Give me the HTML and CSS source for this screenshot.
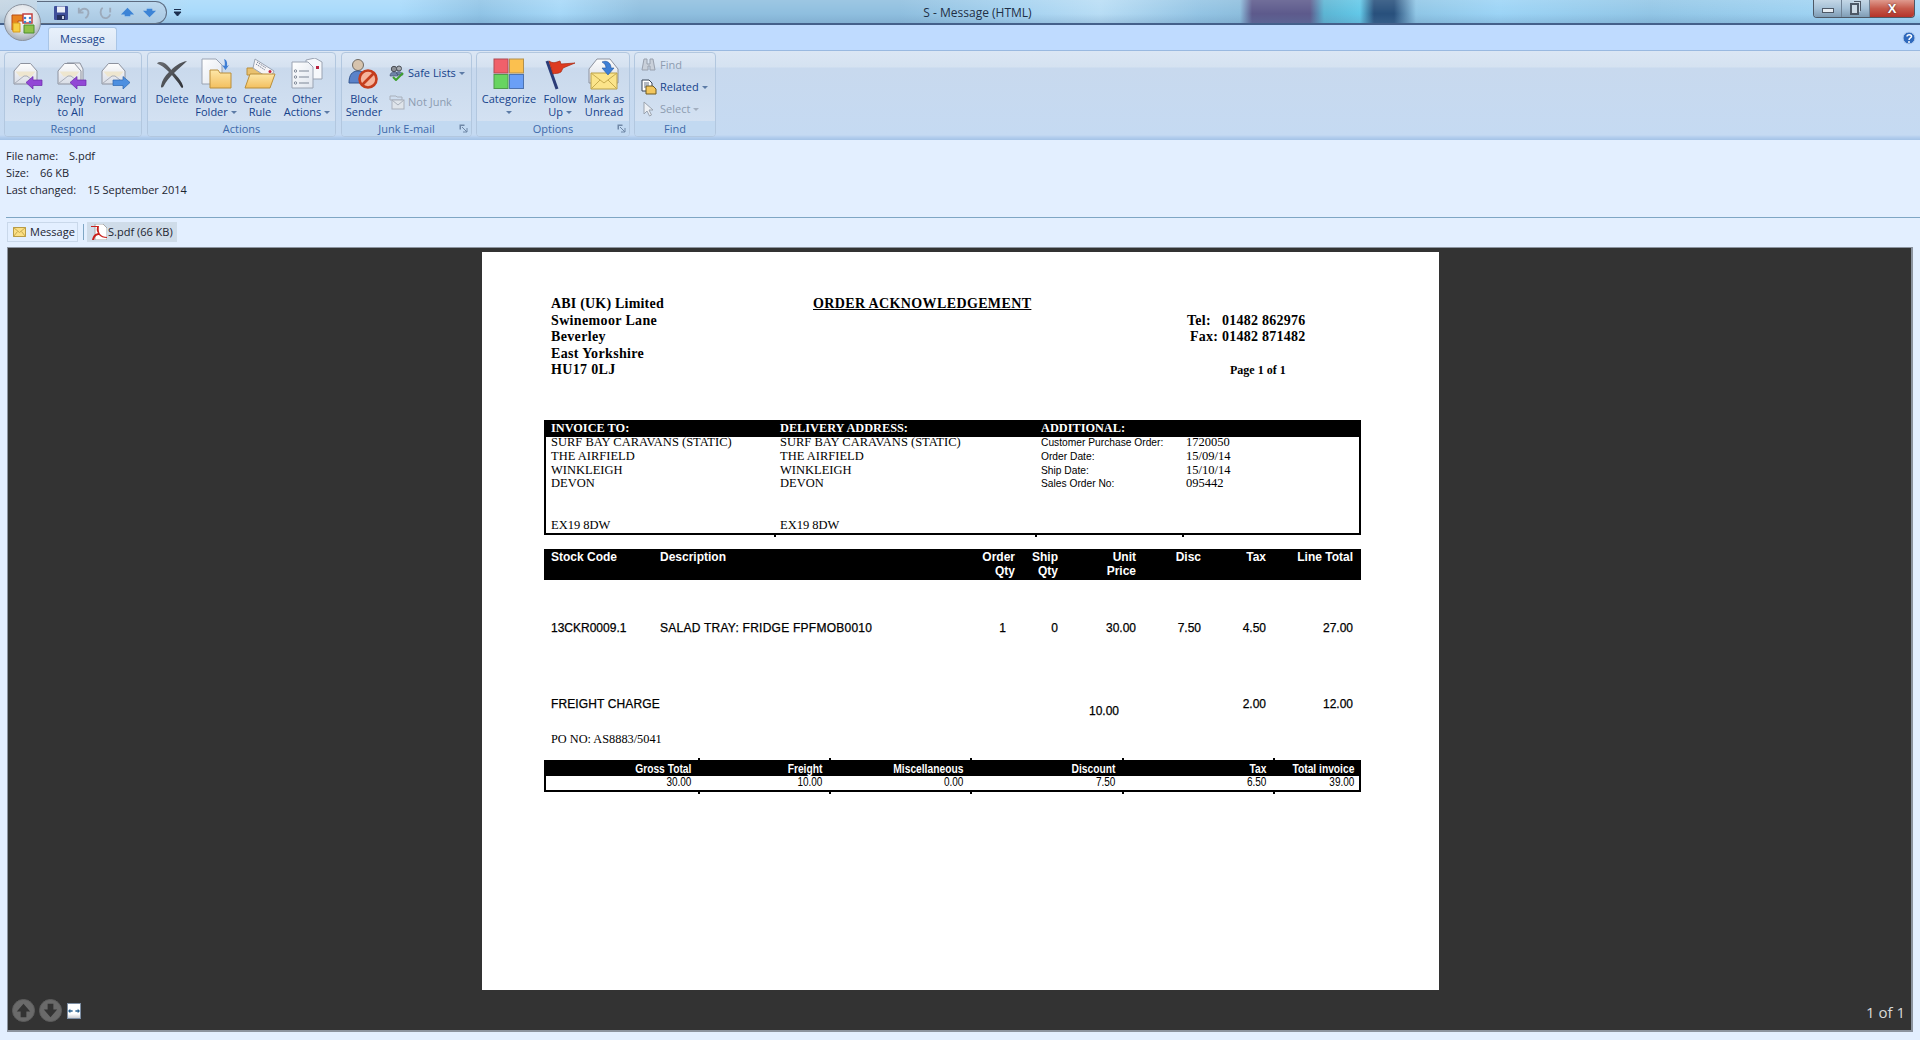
FILE: index.html
```html
<!DOCTYPE html>
<html lang="en">
<head>
<meta charset="utf-8">
<title>S - Message (HTML)</title>
<link rel="stylesheet" href="styles.css">
</head>
<body>
<svg class="defs" width="0" height="0" aria-hidden="true">
  <defs>
    <linearGradient id="gEnv" x1="0" y1="0" x2="0" y2="1"><stop offset="0" stop-color="#fdfdfd"/><stop offset="1" stop-color="#d9dde6"/></linearGradient>
    <linearGradient id="gFold" x1="0" y1="0" x2="0" y2="1"><stop offset="0" stop-color="#fde7a8"/><stop offset="1" stop-color="#f3bf5e"/></linearGradient>
    <linearGradient id="gDoc" x1="0" y1="0" x2="1" y2="1"><stop offset="0" stop-color="#ffffff"/><stop offset="1" stop-color="#dfe5ee"/></linearGradient>
    <linearGradient id="gX" x1="0" y1="0" x2="1" y2="1"><stop offset="0" stop-color="#6c6f74"/><stop offset="1" stop-color="#2f3136"/></linearGradient>
    <radialGradient id="gOrb" cx=".5" cy=".35" r=".7"><stop offset="0" stop-color="#fbfbfb"/><stop offset=".55" stop-color="#dfe3e8"/><stop offset="1" stop-color="#9aa2ad"/></radialGradient>
    <symbol id="env" viewBox="0 0 32 32">
      <path d="M3 13 9.500 5.500h10L26 13v13H3z" fill="url(#gEnv)" stroke="#8d929e"/>
      <path d="M4.500 13.500h20l-4 5h-12z" fill="#eee6cf"/>
      <path d="M3.500 25.500 13 18h3l9.500 7.500" fill="none" stroke="#a9aeb9"/>
    </symbol>
    <symbol id="i-reply" viewBox="0 0 32 32">
      <use href="#env"/>
      <path d="M15 24.500 22 18.500v3.500h9v5.500h-9V31z" fill="#9247d6" stroke="#6a2aa8" stroke-width=".7"/>
    </symbol>
    <symbol id="i-replyall" viewBox="0 0 32 32">
      <path d="M12 5h13l3 6v12H14z" fill="#eef0f4" stroke="#8d929e"/>
      <use href="#env"/>
      <path d="M15 24.500 22 18.500v3.500h9v5.500h-9V31z" fill="#9247d6" stroke="#6a2aa8" stroke-width=".7"/>
    </symbol>
    <symbol id="i-forward" viewBox="0 0 32 32">
      <use href="#env"/>
      <path d="M31 24.500 24 18.500v3.500h-10v5.500h10V31z" fill="#4d8fe0" stroke="#2b65b0" stroke-width=".7"/>
    </symbol>
    <symbol id="i-delete" viewBox="0 0 32 32">
      <path d="M1 5.500C3 3 8 4 11 7c3 3 5 6 7 8 4 4 8 9 9 13 .5 2-1 2.500-2 1C22 24 17 18 13 14 9 10 5 7 1 5.500z" fill="url(#gX)"/>
      <path d="M31 3C24 4 18 9 13 14 9 18 6 22 5 28c-.3 2 1.500 2 2.500.5C10 23 14 19 18 15c4-4 9-8 13-12z" fill="url(#gX)"/>
    </symbol>
    <symbol id="i-move" viewBox="0 0 32 32">
      <path d="M2 1h14l6 6v19H2z" fill="url(#gDoc)" stroke="#9aa3b2"/>
      <path d="M10 12h8l2 3h11v15H10z" fill="url(#gFold)" stroke="#b98e3c"/>
      <path d="M24 1c3 1 3.500 4 3 7l2-1-3.500 5L22 7l2.500 1c.5-2 .5-4-.5-7z" fill="#3f7fd4"/>
    </symbol>
    <symbol id="i-rule" viewBox="0 0 32 32">
      <path d="M3 10h9l2 3h12v4H3z" fill="#e9c16f" stroke="#b98e3c"/>
      <path d="M11 1 30 13l-4 8-17-11z" fill="#f6f4f6" stroke="#9aa3b2"/>
      <path d="M13 4l9 6M12 6l9 6" stroke="#6e7c93" stroke-dasharray="1.500 1"/>
      <circle cx="26" cy="13.500" r="1.500" fill="#c4213d"/>
      <path d="M6 16h25l-5 14H1z" fill="url(#gFold)" stroke="#b98e3c"/>
    </symbol>
    <symbol id="i-other" viewBox="0 0 32 32">
      <path d="M15 2 24 0l7 4v17H15z" fill="#f6f8fb" stroke="#9aa3b2"/>
      <rect x="25" y="8" width="3" height="3" fill="#b8223f"/>
      <path d="M1 4h16l5 5v21H1z" fill="url(#gDoc)" stroke="#9aa3b2"/>
      <g stroke="#7c8696"><path d="M8 13h10M8 19h10M8 25h10" fill="none"/><circle cx="4.500" cy="13" r="1.200" fill="#fff"/><circle cx="4.500" cy="19" r="1.200" fill="#fff"/><circle cx="4.500" cy="25" r="1.200" fill="#fff"/></g>
    </symbol>
    <symbol id="i-block" viewBox="0 0 32 32">
      <circle cx="10" cy="7" r="5.500" fill="#d6c3ad" stroke="#6f6a63"/>
      <path d="M1 25c0-8 3-12 9-12s9 4 9 12z" fill="#5a82c9" stroke="#32558f"/>
      <circle cx="20" cy="21" r="8.500" fill="#f5b49c" stroke="#c43d1d" stroke-width="2.600"/>
      <path d="M14 27 26 15" stroke="#c43d1d" stroke-width="2.600"/>
    </symbol>
    <symbol id="i-cat" viewBox="0 0 32 32">
      <rect x="1" y="1" width="14" height="14" fill="#f0606a" stroke="#b04a52"/>
      <rect x="16.500" y="1" width="14" height="14" fill="#fbc04f" stroke="#b3904c"/>
      <rect x="1" y="16.500" width="14" height="14" fill="#67d460" stroke="#4f9a4a"/>
      <rect x="16.500" y="16.500" width="14" height="14" fill="#6a9ff6" stroke="#4d73b0"/>
    </symbol>
    <symbol id="i-flag" viewBox="0 0 32 32">
      <path d="M3 3 13 31" stroke="#2b3c78" stroke-width="3"/>
      <path d="M5 3c3 2 5 2 8 1l3-1 1 3 14-1-12 5-2 4c-3 2-6 1-8 2z" fill="#de3b20" stroke="#a8260f" stroke-width=".7"/>
    </symbol>
    <symbol id="i-unread" viewBox="0 0 32 32">
      <path d="M1 11 9 1h13l8 10v14H1z" fill="url(#gEnv)" stroke="#8d929e"/>
      <path d="M3 15h26v16H3z" fill="#fbe48a" stroke="#b9a04a"/>
      <path d="M3 15l13 10 13-10M3 31l9-9M29 31l-9-9" fill="none" stroke="#c7ab4e"/>
      <path d="M14 4c4-2 9 0 9 6h3l-6 7-6-7h4c0-3-2-5-4-6z" fill="#3d7fd6" stroke="#27589e" stroke-width=".6"/>
    </symbol>
    <symbol id="i-safe" viewBox="0 0 16 16">
      <circle cx="5" cy="4" r="2.700" fill="#8b8f95" stroke="#4b4f56"/>
      <circle cx="10" cy="3.500" r="2.500" fill="#a7abb0" stroke="#4b4f56"/>
      <path d="M1 11c0-3 2-4 4-4s4 1 4 4zM7 8c1-2 6-2 7 2H9z" fill="#6f84a8" stroke="#3f4f6d" stroke-width=".6"/>
      <path d="M4 12l3 3 7-7" fill="none" stroke="#3ea02f" stroke-width="2"/>
    </symbol>
    <symbol id="i-notjunk" viewBox="0 0 16 16">
      <path d="M1 2h6l1 1h5v3H1z" fill="none" stroke="#a9b0bb"/>
      <rect x="3" y="6" width="12" height="9" fill="#dfe4ea" stroke="#a9b0bb"/>
      <path d="M3 6l6 5 6-5" fill="none" stroke="#a9b0bb"/>
    </symbol>
    <symbol id="i-find" viewBox="0 0 16 16">
      <path d="M3 2h3v5h3V2h3l2 11H9V9H7v4H1z" fill="#c9d0da" stroke="#98a0ad"/>
    </symbol>
    <symbol id="i-related" viewBox="0 0 16 16">
      <path d="M1 1h7l3 3v8H1z" fill="#fff" stroke="#394556"/>
      <path d="M5 7h7l3 3v5H5z" fill="#f3c75e" stroke="#6e5a22"/>
      <path d="M3 4h5M3 6h5M3 8h2" stroke="#687587"/>
    </symbol>
    <symbol id="i-select" viewBox="0 0 16 16">
      <path d="M3 1v12l3-3 2.500 5 2-1-2.500-5h4z" fill="#eef1f5" stroke="#9aa3af"/>
    </symbol>
    <symbol id="i-launch" viewBox="0 0 9 9">
      <path d="M.5.500h5v1.500h-3.500v3.500H.5z" fill="#6f87a6"/>
      <path d="M3 3l5 5M8 4v4H4" fill="none" stroke="#6f87a6"/>
    </symbol>
  </defs>
</svg>

<header class="titlebar">
  <div class="qat">
    <svg class="qi" viewBox="0 0 16 16"><rect x="1" y="1" width="14" height="14" rx="1" fill="#3f4f9a"/><rect x="4" y="1.500" width="8" height="6" fill="#e9edf6"/><rect x="4" y="10" width="8" height="5" fill="#26315f"/><rect x="9" y="11" width="2" height="3" fill="#c8d0e4"/></svg>
    <svg class="qi" viewBox="0 0 16 16"><path d="M3 3v5h5M3.500 8C5 4 9 3 12 5c2 2 2 6-2 9" fill="none" stroke="#9caabb" stroke-width="2"/></svg>
    <svg class="qi" viewBox="0 0 16 16"><path d="M13 3v5M5 3C2 5 2 10 5 13c3 2 7 1 8-3" fill="none" stroke="#9caabb" stroke-width="2"/></svg>
    <svg class="qi" viewBox="0 0 16 16"><path d="M8 3l7 7h-4v2H5v-2H1z" fill="#3d84d6"/><path d="M6 12h4v1H6z" fill="#8ec0f0"/></svg>
    <svg class="qi" viewBox="0 0 16 16"><path d="M8 13l7-7h-4V4H5v2H1z" fill="#3d84d6"/><path d="M6 3h4v1H6z" fill="#8ec0f0"/></svg>
  </div>
  <svg class="qatmore" viewBox="0 0 9 9"><path d="M1 1.500h7M1 4h7L4.500 8z" fill="#1c2f4f" stroke="#1c2f4f"/></svg>
  <div class="wintitle">S - Message (HTML)</div>
  <div class="winbtns">
    <span class="wb wb-min"><i></i></span>
    <span class="wb wb-max"><i></i></span>
    <span class="wb wb-close">X</span>
  </div>
</header>

<button class="orb" type="button" aria-label="Office button">
  <svg viewBox="0 0 37 37" width="37" height="37">
    <circle cx="18.500" cy="18.500" r="18" fill="url(#gOrb)" stroke="#8a929e"/>
    <path d="M8 11h11v6h-5v9H8z" fill="#e88420" stroke="#b84c14"/>
    <path d="M19 10h9v9h-9z" fill="#fff" stroke="#c2403f" stroke-width="1.500"/>
    <path d="M9 19h7v9H9z" fill="#f7cf45" stroke="#d89b1c"/>
    <path d="M20 21h10v8H20z" fill="#8fc24a" stroke="#4b8e2e"/>
    <circle cx="21" cy="14" r="1.300" fill="#3f82d0"/><circle cx="26" cy="14" r="1.300" fill="#3f82d0"/><circle cx="21" cy="18" r="1.300" fill="#3f82d0"/><circle cx="26" cy="18" r="1.300" fill="#3f82d0"/>
  </svg>
</button>

<nav class="tabstrip">
  <div class="tab">Message</div>
  <svg class="help" viewBox="0 0 14 14"><circle cx="7" cy="7" r="6" fill="#2f69bd" stroke="#b5cdee"/><path d="M5 5.500C5 3 9.500 3 9.500 5.500 9.500 7 7 7 7 9" fill="none" stroke="#fff" stroke-width="1.500"/><circle cx="7" cy="11" r="1" fill="#fff"/></svg>
</nav>

<section class="ribbon">
  <div class="group g-respond">
    <div class="gbody">
      <div class="rb w44"><svg class="lg"><use href="#i-reply"/></svg><span>Reply</span></div>
      <div class="rb w43"><svg class="lg"><use href="#i-replyall"/></svg><span>Reply<br>to All</span></div>
      <div class="rb w46"><svg class="lg"><use href="#i-forward"/></svg><span>Forward</span></div>
    </div>
    <div class="glabel">Respond</div>
  </div>
  <div class="group g-actions">
    <div class="gbody">
      <div class="rb w44"><svg class="lg"><use href="#i-delete"/></svg><span>Delete</span></div>
      <div class="rb w44"><svg class="lg"><use href="#i-move"/></svg><span>Move to<br>Folder <b class="dd"></b></span></div>
      <div class="rb w44"><svg class="lg"><use href="#i-rule"/></svg><span>Create<br>Rule</span></div>
      <div class="rb w50"><svg class="lg"><use href="#i-other"/></svg><span>Other<br>Actions <b class="dd"></b></span></div>
    </div>
    <div class="glabel">Actions</div>
  </div>
  <div class="group g-junk">
    <div class="gbody">
      <div class="rb w42"><svg class="lg"><use href="#i-block"/></svg><span>Block<br>Sender</span></div>
      <div class="smcol junkcol">
        <div class="sm"><svg class="smi"><use href="#i-safe"/></svg><span>Safe Lists <b class="dd"></b></span></div>
        <div class="sm off"><svg class="smi"><use href="#i-notjunk"/></svg><span>Not Junk</span></div>
      </div>
    </div>
    <div class="glabel">Junk E-mail<svg class="launch"><use href="#i-launch"/></svg></div>
  </div>
  <div class="group g-options">
    <div class="gbody">
      <div class="rb w60"><svg class="lg"><use href="#i-cat"/></svg><span>Categorize<br><b class="dd"></b></span></div>
      <div class="rb w42"><svg class="lg"><use href="#i-flag"/></svg><span>Follow<br>Up <b class="dd"></b></span></div>
      <div class="rb w46"><svg class="lg"><use href="#i-unread"/></svg><span>Mark as<br>Unread</span></div>
    </div>
    <div class="glabel">Options<svg class="launch"><use href="#i-launch"/></svg></div>
  </div>
  <div class="group g-find">
    <div class="gbody">
      <div class="smcol findcol">
        <div class="sm off"><svg class="smi"><use href="#i-find"/></svg><span>Find</span></div>
        <div class="sm"><svg class="smi"><use href="#i-related"/></svg><span>Related <b class="dd"></b></span></div>
        <div class="sm off"><svg class="smi"><use href="#i-select"/></svg><span>Select <b class="dd"></b></span></div>
      </div>
    </div>
    <div class="glabel">Find</div>
  </div>
</section>

<section class="info">
  <p><span class="k">File name:</span>S.pdf</p>
  <p><span class="k">Size:</span>66 KB</p>
  <p><span class="k">Last changed:</span>15 September 2014</p>
</section>

<section class="attach">
  <div class="at at-msg">
    <svg class="ati" viewBox="0 0 13 10"><rect x=".5" y=".5" width="12" height="9" fill="#fbdf84" stroke="#b89b45"/><path d="M.5.500l6 5 6-5M.5 9.500l4-5M12.500 9.500l-4-5" fill="none" stroke="#c8ab50"/></svg>
    Message
  </div>
  <div class="atsep"></div>
  <div class="at at-pdf">
    <svg class="pdfi" viewBox="0 0 16 16"><path d="M4 0h8l4 4v12H4z" fill="#fff" stroke="#a9a9a9"/><path d="M0 2h8c0 0-1 5 1 8 1.500 2 4 3 7 3v1c-4 0-6-1-8-3-2 0-4 1-5 5H1c1-5 3-6 6-7C5 6 6 5 6 3H0z" fill="#c9201c"/></svg>
    S.pdf (66 KB)
  </div>
</section>

<main class="frame">
  <article class="page">
    <div class="dochead">
      <div class="co">
        <div class="co1">ABI (UK) Limited</div>
        <div>Swinemoor Lane</div>
        <div>Beverley</div>
        <div>East Yorkshire</div>
        <div>HU17 0LJ</div>
      </div>
      <h1 class="doctitle">ORDER ACKNOWLEDGEMENT</h1>
      <div class="contact">
        <div class="tel">Tel:&nbsp;&nbsp; 01482 862976</div>
        <div class="fax">Fax: 01482 871482</div>
        <div class="pg">Page 1 of 1</div>
      </div>
    </div>

    <div class="addr">
      <div class="addr-h">
        <span>INVOICE TO:</span><span>DELIVERY ADDRESS:</span><span>ADDITIONAL:</span>
      </div>
      <div class="addr-b">
        <div>SURF BAY CARAVANS (STATIC)<br>THE AIRFIELD<br>WINKLEIGH<br>DEVON<div class="pc">EX19 8DW</div></div>
        <div>SURF BAY CARAVANS (STATIC)<br>THE AIRFIELD<br>WINKLEIGH<br>DEVON<div class="pc">EX19 8DW</div></div>
        <dl class="addl">
          <dt>Customer Purchase Order:</dt><dd>1720050</dd>
          <dt>Order Date:</dt><dd>15/09/14</dd>
          <dt>Ship Date:</dt><dd>15/10/14</dd>
          <dt>Sales Order No:</dt><dd>095442</dd>
        </dl>
      </div>
    </div>
    <div class="ticks ticks-a"><i></i><i></i><i></i><i></i></div>

    <div class="lines lines-h">
      <span class="c-code">Stock Code</span><span class="c-desc">Description</span>
      <span class="r">Order<br>Qty</span><span class="r">Ship<br>Qty</span><span class="r">Unit<br>Price</span><span class="r">Disc</span><span class="r">Tax</span><span class="r">Line Total</span>
    </div>
    <div class="lines row1">
      <span class="c-code">13CKR0009.1</span><span class="c-desc salad">SALAD TRAY: FRIDGE FPFMOB0010</span>
      <span class="r one">1</span><span class="r">0</span><span class="r">30.00</span><span class="r">7.50</span><span class="r">4.50</span><span class="r">27.00</span>
    </div>
    <div class="lines row2">
      <span class="c-wide">FREIGHT CHARGE</span>
      <span class="r drop">10.00</span><span class="r"></span><span class="r">2.00</span><span class="r">12.00</span>
    </div>
    <div class="pono">PO NO: AS8883/5041</div>

    <div class="ticks ticks-t"><i></i><i></i><i></i><i></i><i></i><i></i></div>
    <div class="totals">
      <div class="tot-h"><span>Gross Total</span><span>Freight</span><span>Miscellaneous</span><span>Discount</span><span>Tax</span><span>Total invoice</span></div>
      <div class="tot-b"><span>30.00</span><span>10.00</span><span>0.00</span><span>7.50</span><span>6.50</span><span>39.00</span></div>
    </div>
    <div class="ticks ticks-t"><i></i><i></i><i></i><i></i><i></i><i></i></div>
  </article>

  <div class="pager">
    <span class="circ"><svg viewBox="0 0 22 22"><path d="M11 4l7 8h-4v6H8v-6H4z" fill="#333"/></svg></span>
    <span class="circ"><svg viewBox="0 0 22 22"><path d="M11 18l7-8h-4V4H8v6H4z" fill="#333"/></svg></span>
    <span class="fit"><svg viewBox="0 0 13 8"><path d="M0 4l2.500-2.500v1.700H5v1.600H2.500v1.700zM13 4l-2.500-2.500v1.700H8v1.600h2.500v1.700z" fill="#27608f"/></svg></span>
  </div>
  <div class="count">1 of 1</div>
</main>
</body>
</html>
```

FILE: styles.css
```css
* { box-sizing: border-box; }
html, body { margin: 0; height: 100%; }
body {
  width: 1920px; height: 1040px; overflow: hidden; position: relative;
  background: #e3efff;
  font-family: "Open Sans", "Noto Sans", "Liberation Sans", sans-serif;
  font-size: 11px; color: #15428b;
}
.defs { position: absolute; }

/* title bar */
.titlebar {
  height: 25px; display: flex; align-items: flex-start;
  border-bottom: 2px solid #44608a;
  background:
    linear-gradient(180deg, rgba(255,255,255,.12) 0, rgba(255,255,255,0) 60%, rgba(90,130,170,.25) 100%),
    linear-gradient(90deg, #c3d4e2 0, #b5d3ea 110px, #a8dafb 190px, #a8dafb 400px, #90c4e6 480px, #a6d8f8 560px, #8fbfdf 640px, #8fbfdf 900px, #a5d2f0 1020px, #b8ddf5 1100px, #93c4e4 1200px, #8dbedd 1240px, #5d5a8c 1252px, #5d5a8c 1310px, #5cb5d3 1324px, #62c8e8 1360px, #28507c 1374px, #28507c 1394px, #8fc6e6 1416px, #9cd4f6 1500px, #92c6e6 1650px, #a6dafa 1920px);
}
.qat {
  margin-left: 37px; width: 130px; height: 23px; margin-top: 1px;
  display: flex; align-items: center; gap: 7px; padding-left: 16px;
  border: 1px solid #5c6b80; border-left: 0; border-radius: 0 12px 12px 0;
  background: linear-gradient(180deg, #bcd8ee, #a9c8e2);
}
.qi { width: 15px; height: 15px; }
.qat .qi:first-child { width: 16px; height: 16px; }
.qatmore { width: 9px; height: 9px; margin: 8px 0 0 6px; }
.wintitle {
  flex: 1; text-align: center; padding-right: 40px; padding-top: 4px;
  font-size: 12px; line-height: 17px; color: #1f2f45;
}
.winbtns {
  display: flex; height: 18px; margin-right: 5px; width: 102px;
  border: 1px solid #4d5866; border-top: 0; border-radius: 0 0 4px 4px; overflow: hidden;
}
.wb { display: flex; align-items: center; justify-content: center; }
.wb-min, .wb-max { width: 28px; background: linear-gradient(180deg, #c4d7e6, #a5c0d6 50%, #7f9cb4); border-right: 1px solid #6f8295; }
.wb-min i { width: 12px; height: 5px; margin-top: 4px; background: #e6edf3; border: 1px solid #4d5866; }
.wb-max i { width: 9px; height: 12px; margin-left: -2px; background: #cddbe7; border: 2px solid #4d5866; box-shadow: 2px -2px 0 -1px #cddbe7, 3px -3px 0 -1px #4d5866; }
.wb-close {
  flex: 1; background: linear-gradient(180deg, #df9a8e, #c65a4b 50%, #b4332a);
  color: #fff; font-weight: 700; font-size: 13px; line-height: 1; font-family: "Liberation Sans", sans-serif;
  text-shadow: 0 0 2px #45261f;
}

/* office orb */
.orb {
  position: absolute; left: 4px; top: 4px; width: 37px; height: 37px;
  padding: 0; border: 0; background: none;
}

/* tabs */
.tabstrip {
  height: 25px; display: flex; align-items: flex-end; justify-content: space-between;
  padding: 0 4px 0 48px; background: #bfdbff;
}
.tab {
  width: 69px; height: 23px; text-align: center; line-height: 21px;
  font-size: 11px; color: #15428b;
  background: linear-gradient(180deg, #e8f1fb, #dbe6f4);
  border: 1px solid #a9c5e6; border-bottom: 0; border-radius: 3px 3px 0 0;
}
.help { width: 14px; height: 14px; margin-bottom: 5px; }

/* ribbon */
.ribbon {
  height: 90px; display: flex; gap: 5px; padding: 1px 0 0 4px;
  background: linear-gradient(180deg, #dbe6f4 0, #d5e2f1 16px, #c8d9ee 17px, #c5daf2 84px, #b5cfee 86px, #9fbfe4 90px);
  border-top: 1px solid #9ab9e0;
}
.group {
  height: 85px; display: flex; flex-direction: column; overflow: hidden;
  border: 1px solid #b2c7df; border-radius: 4px;
  background: linear-gradient(180deg, #dee8f5 0, #d5e1f0 14px, #c9d9ec 15px, #d3e1f2 68px);
}
.g-respond { width: 138px; }
.g-actions { width: 189px; }
.g-junk { width: 131px; }
.g-options { width: 154px; margin-left: -1px; }
.g-find { width: 82px; margin-left: -1px; }
.gbody { height: 68px; display: flex; padding-left: 0; }
.g-actions .gbody, .g-options .gbody { padding-left: 2px; }
.g-junk .gbody { padding-left: 1px; }
.glabel {
  height: 15px; position: relative; text-align: center; line-height: 15px;
  font-size: 11px; color: #3e6aaa; background: #c2d9f1;
}
.launch { position: absolute; right: 3px; top: 3px; width: 9px; height: 9px; }
.rb { display: flex; flex-direction: column; align-items: center; padding-top: 5px; text-align: center; line-height: 13px; white-space: nowrap; }
.rb span { margin-top: 2px; }
.lg { width: 32px; height: 32px; display: block; }
.w42 { width: 42px; } .w43 { width: 43px; } .w44 { width: 44px; } .w46 { width: 46px; } .w50 { width: 50px; } .w60 { width: 60px; }
.dd {
  display: inline-block; width: 0; height: 0; vertical-align: 2px;
  border: 3px solid transparent; border-top-color: #5c7ba6; border-bottom: 0;
}
.smcol { display: flex; flex-direction: column; }
.junkcol { padding: 12px 0 0 4px; gap: 13px; }
.findcol { padding: 4px 0 0 6px; gap: 6px; }
.sm { display: flex; align-items: center; gap: 3px; height: 16px; white-space: nowrap; line-height: 16px; }
.sm.off { color: #8d9cb0; }
.sm.off .dd { border-top-color: #a3afc0; }
.smi { width: 16px; height: 16px; }

/* info */
.info { height: 77px; padding-top: 7px; color: #1c2430; font-size: 11px; }
.info p { margin: 0 0 0 6px; height: 17px; line-height: 17px; letter-spacing: -.03px; }
.k { margin-right: 11px; }

/* attachments */
.attach {
  height: 30px; margin-left: 6px; border-top: 1px solid #7fa6c4;
  display: flex; align-items: flex-start; padding: 4px 0 0 1px; color: #1c2430;
}
.at { display: flex; align-items: center; height: 20px; line-height: 20px; }
.at-msg { width: 71px; padding-left: 5px; gap: 4px; border: 1px solid #c9d8ea; }
.ati { width: 13px; height: 10px; }
.atsep { width: 1px; height: 16px; background: #7fa6c4; margin: 2px 3px 0 5px; }
.at-pdf { width: 90px; padding-left: 4px; gap: 1px; background: #cfdce9; }
.pdfi { width: 16px; height: 16px; }

/* preview frame */
.frame {
  position: relative; width: 1906px; height: 785px; margin-left: 7px;
  background: #333; border: 1px solid #8c949f; border-width: 1px 2px 2px 1px;
  padding: 4px 0 0 474px;
}
.page {
  width: 957px; height: 738px; background: #fff;
  padding: 44px 78px 0 62px; color: #000;
  font-family: "Liberation Serif", "Times New Roman", serif;
  font-size: 12.5px;
}
.dochead {
  display: grid; grid-template-columns: 269px 374px 174px; height: 124px; margin: 0;
  font-weight: 700;
}
.co { padding-left: 7px; font-size: 14px; line-height: 16.5px; letter-spacing: .35px; }
.co1 { letter-spacing: .2px; }
.doctitle {
  margin: 0; font-size: 14px; line-height: 16.5px; font-weight: 700; text-decoration: underline; letter-spacing: .38px;
}
.contact { padding-top: 16.5px; font-size: 14px; line-height: 16.5px; letter-spacing: .25px; white-space: nowrap; }
.fax { padding-left: 3px; }
.pg { padding: 16px 0 0 43px; font-size: 12px; letter-spacing: 0; }

.addr { height: 115px; border: 2px solid #000; border-top: 0; }
.addr-h, .addr-b { display: grid; grid-template-columns: 229px 261px 1fr; padding-left: 5px; }
.addr-h { margin: 0 -2px; padding-left: 7px; height: 17px; line-height: 17px; background: #000; color: #fff; font-weight: 700; font-size: 12.3px; }
.addr-b { line-height: 13.8px; font-size: 12.5px; margin-top: -1px; }
.addl { margin: 0; display: grid; grid-template-columns: 145px 1fr; grid-auto-rows: 13.8px; }
.addl dt {
  font-family: "Liberation Sans", Arial, sans-serif; font-size: 11.5px;
  transform: scaleX(.89); transform-origin: left center; white-space: nowrap;
}
.addl dd { margin: 0; }
.pc { margin-top: 27.6px; }
.ticks { display: grid; height: 2px; }
.ticks i { border-left: 2px solid #000; }
.ticks i:first-child { border-left: 0; }
.ticks-a { grid-template-columns: 230px 261px 147px 1fr; margin-bottom: 12px; }
.ticks-t { grid-template-columns: 154px 131px 141px 152px 151px 1fr; }

.lines {
  display: grid; grid-template-columns: 109px 305px 50px 43px 78px 65px 65px 87px;
  padding: 0 8px 0 7px; font-family: "Liberation Sans", Arial, sans-serif; font-weight: 700; font-size: 12px; line-height: 14px;
}
.lines-h { height: 31px; padding-top: 1px; background: #000; color: #fff; }
.row1 { margin-top: 41px; height: 14px; font-weight: 400; -webkit-text-stroke: .25px #000; }
.row2 { margin-top: 62px; height: 14px; font-weight: 400; -webkit-text-stroke: .25px #000; }
.salad { letter-spacing: .25px; }
.row2 .c-wide { grid-column: 1 / 5; letter-spacing: .12px; }
.r { text-align: right; }
.one { padding-right: 9px; }
.drop { margin-top: 7px; padding-right: 17px; }
.pono { margin-top: 21px; height: 26px; line-height: 14px; padding-left: 7px; font-size: 12.3px; }

.totals { height: 32px; border: 2px solid #000; border-top: 0; }
.tot-h, .tot-b {
  display: grid; grid-template-columns: 147px 131px 141px 152px 151px 1fr; padding-right: 3px;
  font-family: "Liberation Sans", Arial, sans-serif; font-size: 12.5px; text-align: right;
}
.tot-h span, .tot-b span { padding-right: 2px; transform: scaleX(.82); transform-origin: right center; white-space: nowrap; }
.tot-b span { transform: scaleX(.8); }
.tot-h { height: 16px; margin: 0 -2px; padding-left: 2px; padding-right: 5px; background: #000; color: #fff; font-weight: 700; line-height: 18px; }
.tot-b { line-height: 13px; }

.pager {
  position: absolute; left: 4px; bottom: 8px; display: flex; align-items: center; gap: 4px;
}
.circ {
  width: 23px; height: 23px; border-radius: 50%; background: #6a6a6a; border: 1px solid #5d5d5d; display: block;
}
.circ svg { width: 21px; height: 21px; display: block; }
.fit {
  width: 14px; height: 16px; margin-left: 1px; display: flex; align-items: center; justify-content: center;
  background: linear-gradient(180deg, #fff 70%, #c9ccd2); border: 1px solid #7d8ea3;
}
.fit svg { width: 12px; height: 8px; }
.count {
  position: absolute; right: 6px; bottom: 8px; font-size: 15px; line-height: 20px; color: #d9d9d9;
}
```
